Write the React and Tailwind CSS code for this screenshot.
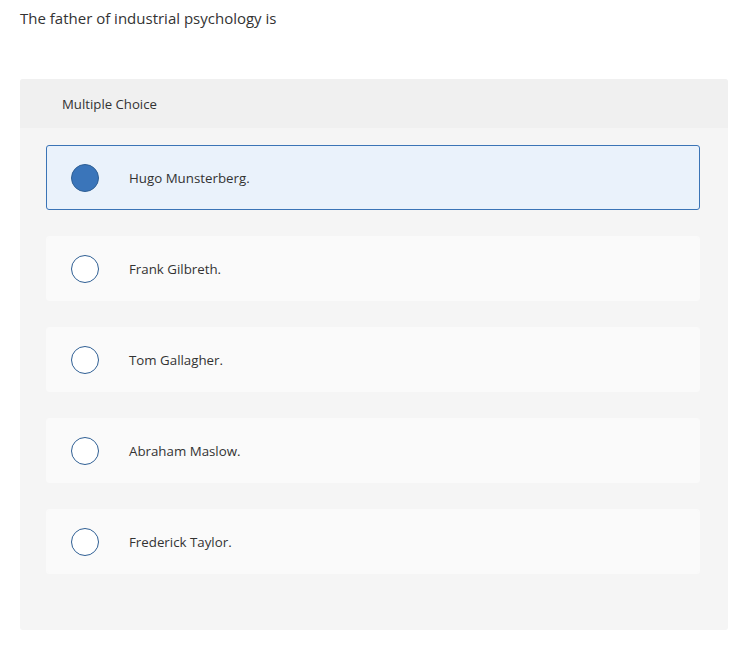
import React from 'react';

const options = [
  'Hugo Munsterberg.',
  'Frank Gilbreth.',
  'Tom Gallagher.',
  'Abraham Maslow.',
  'Frederick Taylor.',
];

function Radio({ checked }) {
  return (
    <span
      className={`w-[28px] h-[28px] rounded-full shrink-0 border-[1.5px] border-[#2f5f94] ${
        checked ? 'bg-[#3a75ba]' : 'bg-white'
      }`}
    />
  );
}

export default function App() {
  const selected = 0;
  return (
    <div className="w-[756px] h-[647px] bg-white text-[#333] pt-[9px] px-[20px]" style={{ fontFamily: '"Open Sans", Lato, sans-serif' }}>
      <p className="text-[15px] leading-[18px] text-[#333]">The father of industrial psychology is</p>

      <div className="mt-[52px] w-[708px] bg-[#f5f5f5] rounded-[3px] overflow-hidden pb-[56px]">
        <div className="h-[49px] bg-[#f0f0f0] flex items-center pt-[2px] pl-[42px] text-[13.2px] text-[#333]">Multiple Choice</div>

        <div className="pt-[17px] pl-[26px] pr-[28px] flex flex-col gap-[26px]">
          {options.map((o, i) => (
            <div
              key={o}
              className={`h-[65px] rounded-[3px] flex items-center pl-[24px] ${
                i === selected ? 'bg-[#eaf2fb] border border-[#3b74b6]' : 'bg-[#fafafa] border border-[#fafafa]'
              }`}
            >
              <Radio checked={i === selected} />
              <span className="ml-[30px] pt-[2px] text-[13.3px] text-[#333]">{o}</span>
            </div>
          ))}
        </div>
      </div>
    </div>
  );
}
